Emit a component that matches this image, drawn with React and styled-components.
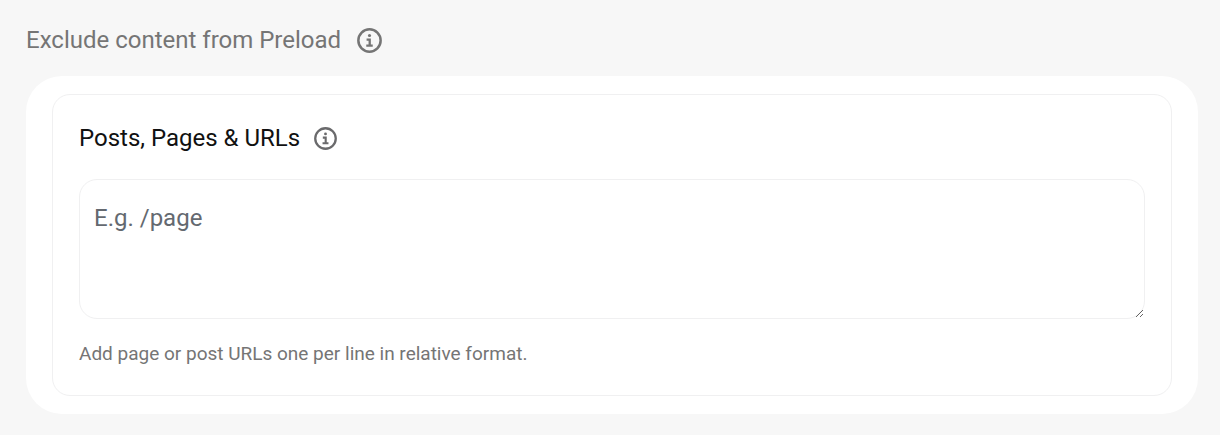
import React, { useState } from "react";
import styled, { createGlobalStyle } from "styled-components";

const GlobalStyle = createGlobalStyle`
  * {
    box-sizing: border-box;
  }

  body {
    margin: 0;
    background: #f7f7f7;
    font-family: Roboto, sans-serif;
  }
`;

const Section = styled.section`
  padding: 24px 22px 22px 26px;
`;

const Heading = styled.div`
  display: flex;
  align-items: center;
  gap: 16px;
  margin-bottom: 20px;
`;

const Title = styled.h2`
  margin: 0;
  font-size: 24px;
  line-height: 32px;
  font-weight: 400;
  color: #757575;
`;

const Panel = styled.div`
  padding: 18px 26px;
  border-radius: 36px;
  background: #ffffff;
`;

const Card = styled.div`
  padding: 28px 26px;
  border: 1px solid #f0f0f1;
  border-radius: 18px;
`;

const FieldHeading = styled.div`
  display: flex;
  align-items: center;
  gap: 14px;
  margin-bottom: 26px;
`;

const Label = styled.label`
  font-size: 24px;
  line-height: 30px;
  color: #111111;
`;

const InfoButton = styled.button`
  display: flex;
  padding: 0;
  border: 0;
  background: none;
  color: ${({ $color }) => $color};
  cursor: pointer;
`;

const TextArea = styled.textarea`
  display: block;
  width: 100%;
  height: 140px;
  padding: 22px 14px;
  border: 1px solid #f0f0f1;
  border-radius: 18px;
  outline: none;
  resize: vertical;
  background: #ffffff;
  color: #2c3338;
  font-family: inherit;
  font-size: 24px;
  line-height: 32px;

  &::placeholder {
    color: #646970;
    opacity: 1;
  }
`;

const Hint = styled.p`
  margin: 22px 0 0;
  font-size: 19px;
  line-height: 26px;
  color: #757575;
`;

const Info = ({ label, size, color }) => (
  <InfoButton type="button" aria-label={label} $color={color}>
    <svg width={size} height={size} viewBox="0 0 24 24" fill="none" aria-hidden="true">
      <circle cx="12" cy="12" r="10.7" stroke="currentColor" strokeWidth="2.4" />
      <circle cx="12" cy="7.2" r="1.5" fill="currentColor" />
      <path d="M9.2 11.1H12.2V16.9M8.9 16.9H15.1" stroke="currentColor" strokeWidth="2.2" />
    </svg>
  </InfoButton>
);

export default function App() {
  const [urls, setUrls] = useState("");

  return (
    <>
      <GlobalStyle />
      <Section>
        <Heading>
          <Title>Exclude content from Preload</Title>
          <Info label="About excluding content" size={25} color="#757575" />
        </Heading>
        <Panel>
          <Card>
            <FieldHeading>
              <Label htmlFor="excluded-urls">Posts, Pages &amp; URLs</Label>
              <Info label="About posts, pages and URLs" size={23} color="#6a6a6c" />
            </FieldHeading>
            <TextArea
              id="excluded-urls"
              aria-describedby="excluded-urls-hint"
              placeholder="E.g. /page"
              value={urls}
              onChange={(e) => setUrls(e.target.value)}
            />
            <Hint id="excluded-urls-hint">Add page or post URLs one per line in relative format.</Hint>
          </Card>
        </Panel>
      </Section>
    </>
  );
}
